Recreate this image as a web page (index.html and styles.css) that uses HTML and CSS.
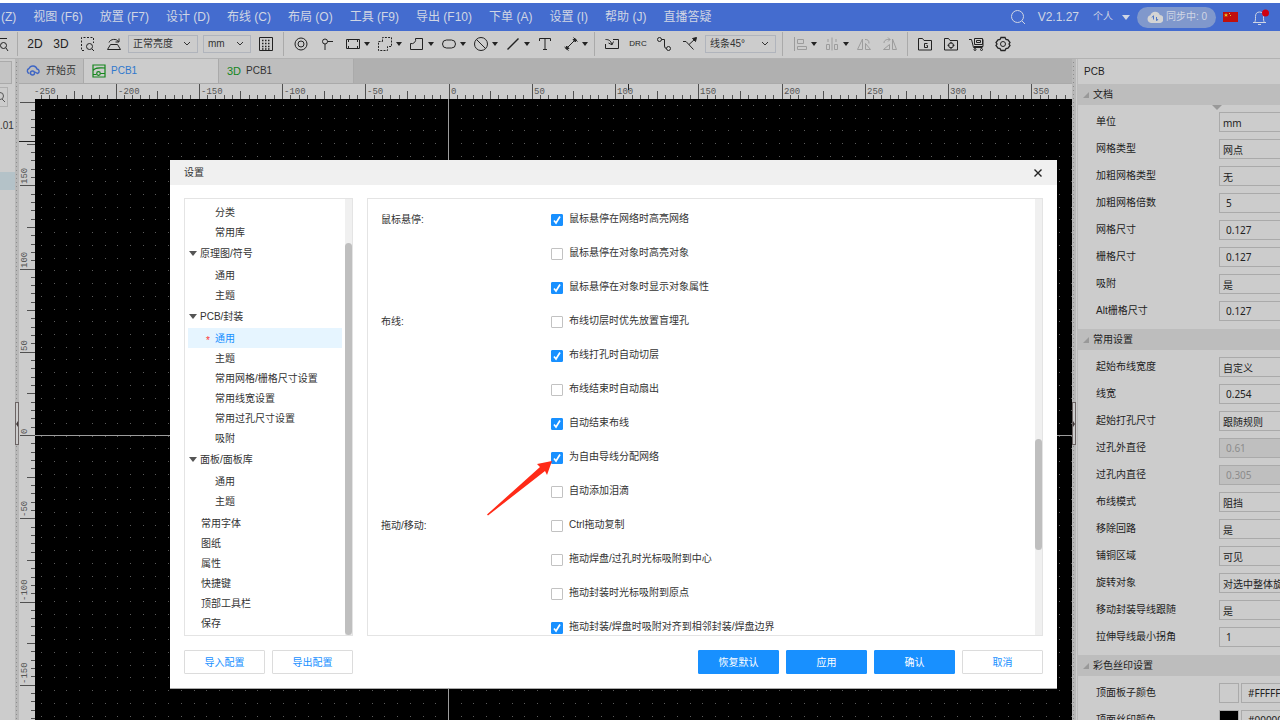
FILE: index.html
```html
<!DOCTYPE html>
<html lang="zh-CN">
<head>
<meta charset="utf-8">
<title>PCB1</title>
<link rel="stylesheet" href="styles.css">
</head>
<body>
<div class="app">
  <header class="menubar">
    <nav class="menus">
      <a href="#">(Z)</a><a href="#">视图 (F6)</a><a href="#">放置 (F7)</a><a href="#">设计 (D)</a><a href="#">布线 (C)</a><a href="#">布局 (O)</a><a href="#">工具 (F9)</a><a href="#">导出 (F10)</a><a href="#">下单 (A)</a><a href="#">设置 (I)</a><a href="#">帮助 (J)</a><a href="#">直播答疑</a>
    </nav>
    <div class="account">
      <svg width="16" height="16" viewBox="0 0 16 16" class="line"><circle cx="7.5" cy="7.5" r="6"/><path d="M12 12l3 3"/></svg>
      <span class="version">V2.1.27</span>
      <button class="team">个人<i class="caret"></i></button>
      <button class="sync"><svg width="16" height="12" viewBox="0 0 16 12"><path fill="#d4d4d4" d="M4 12a4 4 0 0 1-.6-7.8A5 5 0 0 1 12.8 4 4 4 0 0 1 12 12z"/><path fill="none" stroke="#5078c8" d="M6.500 5v3.500M9.500 6v3.500M5 6.500l1.500-2M11 8l-1.500 2"/></svg>同步中: 0</button>
      <svg class="flag" width="15" height="10" viewBox="0 0 15 10"><path fill="#c00f0c" d="M0 0h15v10H0z"/><path fill="#e6c02a" d="M3 1l.6 1.400H5L4 3.300l.4 1.400L3 4l-1.400.7L2 3.300 1 2.400h1.400zM6 1h1v1H6zM7 3h1v1H7z"/></svg>
      <svg class="bell line" width="20" height="18" viewBox="0 0 20 18"><path d="M2 14.500h13M3.500 14.500c1-1.500 1-2.500 1-6 0-3 1.500-4.500 4-4.500s4 1.500 4 4.500c0 3.500 0 4.500 1 6M7 16.500h3"/><circle cx="14.500" cy="5" r="3.500" fill="#cf0010" stroke="none"/></svg>
    </div>
  </header>

  <div class="toolbar">
    <button class="tool edge"><svg width="16" height="16" viewBox="0 0 16 16"><path d="M0 2.500h10M0 6.500h3M0 11.500h3"/><circle cx="6.500" cy="9.500" r="3"/><path d="M9 12l2 3"/></svg></button>
    <span class="sep"></span>
    <button class="tool txt">2D</button><button class="tool txt">3D</button>
    <button class="tool gap"><svg width="16" height="16" viewBox="0 0 16 16"><path stroke-dasharray="2 1.500" d="M4 14.500H1.500v-13h12V7"/><circle cx="9.500" cy="10.500" r="3"/><path d="M12 13l2 2"/></svg></button>
    <button class="tool"><svg width="16" height="16" viewBox="0 0 16 16"><path d="M4.500 8.500h7l3 5h-13zM3 6.500C4 3 11 2 12.500 6M13 2.500V6H9.500"/></svg></button>
    <select class="pick w70" aria-label="亮度"><option>正常亮度</option></select>
    <select class="pick w48" aria-label="单位制"><option>mm</option></select>
    <button class="tool"><svg width="16" height="16" viewBox="0 0 16 16"><path d="M1.500 1.500h13v13h-13z"/><path stroke-width="1.500" stroke-dasharray="1.500 1.500" d="M4 4.500h8M4 7.500h8M4 10.500h8M4 13h8"/></svg></button>
    <span class="sep"></span>
    <button class="tool"><svg width="16" height="16" viewBox="0 0 16 16"><circle cx="8" cy="8" r="6"/><circle cx="8" cy="8" r="3"/></svg></button>
    <button class="tool"><svg width="16" height="16" viewBox="0 0 16 16"><circle cx="6" cy="5.500" r="2.500"/><path d="M8.500 5.500H14M6 8v6"/></svg></button>
    <button class="tool drop"><svg width="16" height="16" viewBox="0 0 16 16"><path d="M1.500 3.500h13v9h-13z"/><path stroke-width="2" d="M3 5h1M12 5h1M3 11h1M12 11h1"/></svg><i class="caret"></i></button>
    <button class="tool drop"><svg width="16" height="16" viewBox="0 0 16 16"><path stroke-dasharray="2 1.200" d="M5.500 5.500v-4h9v9h-4v4h-9v-9z"/></svg><i class="caret"></i></button>
    <button class="tool drop"><svg width="16" height="16" viewBox="0 0 16 16"><path d="M1.500 7.500a4 4 0 0 0 5-5h7v11h-12z"/></svg><i class="caret"></i></button>
    <button class="tool drop"><svg width="16" height="16" viewBox="0 0 16 16"><rect x="1.500" y="4" width="13" height="8" rx="4"/></svg><i class="caret"></i></button>
    <button class="tool drop"><svg width="16" height="16" viewBox="0 0 16 16"><circle cx="8" cy="8" r="6.500"/><path d="M3.500 3.500l9 9"/></svg><i class="caret"></i></button>
    <button class="tool drop"><svg width="16" height="16" viewBox="0 0 16 16"><path stroke-width="1.400" d="M2.500 13.500l11-11"/></svg><i class="caret"></i></button>
    <button class="tool"><svg width="16" height="16" viewBox="0 0 16 16"><path d="M2.500 5V2.500h11V5M8 2.500v11M6 13.500h4"/></svg></button>
    <button class="tool drop"><svg width="16" height="16" viewBox="0 0 16 16"><path d="M3 13L13 3M1.500 11l4 3.500M10.500 1.500l4 4"/><path fill="#222" d="M3 13l.5-3L6 12.500zM13 3l-3 .5L12.500 6z"/></svg><i class="caret"></i></button>
    <span class="sep"></span>
    <button class="tool"><svg width="16" height="16" viewBox="0 0 16 16"><path d="M9 3.500h5.500v9h-13V8M1.500 3.500c3.500 0 5 1 6.500 5M4.500 7L8 8.800 9.500 5.500"/></svg></button>
    <button class="tool mini">DRC</button>
    <button class="tool"><svg width="16" height="16" viewBox="0 0 16 16"><circle cx="3.500" cy="3.500" r="2"/><circle cx="12.500" cy="12.500" r="2"/><path d="M5.500 3.500h3v6.500q0 2.500 2 2.500"/></svg></button>
    <button class="tool"><svg width="16" height="16" viewBox="0 0 16 16"><path d="M1 5.500h3l7.500 8M7 8.500L13 3"/><path fill="#222" d="M14.500 1.500l-1 4-3-3z"/></svg></button>
    <select class="pick w71" aria-label="线条"><option>线条45°</option></select>
    <span class="sep"></span>
    <button class="tool drop dim"><svg width="16" height="16" viewBox="0 0 16 16"><path d="M2.500 1v14M5.500 3.500h6v4h-6zM5.500 10.500h9v3h-9z"/></svg><i class="caret"></i></button>
    <button class="tool drop dim"><svg width="16" height="16" viewBox="0 0 16 16"><path d="M8 1.500v13M2.500 8.500h3v5h-3zM10.500 8.500h3v5h-3zM4 3v3M12 3v3"/></svg><i class="caret"></i></button>
    <button class="tool dim"><svg width="16" height="16" viewBox="0 0 16 16"><path d="M6.500 3v10.500h-5zM9.500 7.500l5 6h-5zM9 3.500c3 0 4 1 4 4"/></svg></button>
    <button class="tool dim"><svg width="16" height="16" viewBox="0 0 16 16"><path d="M10.500 3v10.500h4zM1.500 13.500l6-5v5zM2 7c0-3 3-4 6-3.500M6 1.500l2 2-2 2"/></svg></button>
    <span class="sep"></span>
    <button class="tool"><svg width="16" height="16" viewBox="0 0 16 16"><path d="M1.500 14v-11.500h4l1.500 2h7.500v9.500h-13M10.500 7.500h-3v4h3v-2h-1"/></svg></button>
    <button class="tool"><svg width="16" height="16" viewBox="0 0 16 16"><path d="M1.500 14v-11.500h4l1.500 2h7.500v9.500h-13"/><circle cx="8" cy="9.300" r="2.500"/><path d="M8 5.800v2M8 11v2M4.500 9.300h2M9.500 9.300h2"/></svg></button>
    <button class="tool"><svg width="16" height="16" viewBox="0 0 16 16"><path d="M0 3.500h2.500l2 8h9M5.500 2.500h8v6h-8zM7.500 4.500h4v2h-4zM5 10.500h9v-7"/><circle cx="6" cy="13.500" r="1"/><circle cx="12.500" cy="13.500" r="1"/></svg></button>
    <button class="tool"><svg width="16" height="16" viewBox="0 0 16 16"><path stroke-width="1.300" d="M6 1.500h4l1 2 2 .3 2 2.700-1 1.500 1 1.500-2 2.700-2 .3-1 2H6l-1-2-2-.3-2-2.700L2 8 1 6.500l2-2.700 2-.3z"/><circle cx="8" cy="8" r="2.500"/></svg></button>
  </div>

  <main class="work">
    <aside class="dock">
      <div class="dock-tab"></div>
      <div class="dock-search"><svg width="10" height="12" viewBox="0 0 10 12"><circle cx="0" cy="5" r="3.500"/><path d="M2 8l3 3"/></svg></div>
      <div class="dock-text">.01</div>
      <div class="dock-row"></div>
    </aside>
    <div class="splitter"><button class="grip" aria-label="收起左侧"><svg width="2" height="6" viewBox="0 0 2 6"><path d="M2 0v6L0 3z"/></svg></button></div>

    <section class="editor">
      <div class="tabs">
        <button class="tab"><svg width="15" height="12" viewBox="0 0 15 12" fill="none" stroke="#3f66c4" stroke-width="1.400"><path d="M3.500 8.500A2.600 2.600 0 0 1 3 3.500 4.300 4.300 0 0 1 11 4a2.300 2.300 0 0 1 .5 4.500L9 7"/><circle cx="6.500" cy="8" r="2"/></svg>开始页</button>
        <button class="tab wide on"><svg width="14" height="14" viewBox="0 0 14 14" fill="none" stroke="#14861c" stroke-width="1.200"><path d="M1 1h12v12H1zM1 6.500C4 3 7 4 13 4M1 10.500h3.500M8.500 9.500H13"/><circle cx="6.500" cy="9.500" r="1.800"/></svg>PCB1</button>
        <button class="tab wide"><span class="green">3D</span>PCB1</button>
      </div>
      <svg class="board" id="board"></svg>
    </section>

    <div class="splitter"><button class="grip" aria-label="收起右侧"><svg width="2" height="6" viewBox="0 0 2 6"><path d="M0 0v6l2-3z"/></svg></button></div>
    <aside class="props">
      <h2>PCB</h2>
      <h3>文档</h3>
      <div class="fields first">
        <label class="row"><span>单位</span><select><option>mm</option></select></label>
        <label class="row"><span>网格类型</span><select><option>网点</option></select></label>
        <label class="row"><span>加粗网格类型</span><select><option>无</option></select></label>
        <label class="row"><span>加粗网格倍数</span><input value="5"></label>
        <label class="row"><span>网格尺寸</span><input value="0.127"></label>
        <label class="row"><span>栅格尺寸</span><input value="0.127"></label>
        <label class="row"><span>吸附</span><select><option>是</option></select></label>
        <label class="row"><span>Alt栅格尺寸</span><input value="0.127"></label>
      </div>
      <h3>常用设置</h3>
      <div class="fields">
        <label class="row"><span>起始布线宽度</span><select><option>自定义</option></select></label>
        <label class="row"><span>线宽</span><input value="0.254"></label>
        <label class="row"><span>起始打孔尺寸</span><select><option>跟随规则</option></select></label>
        <label class="row"><span>过孔外直径</span><input value="0.61" disabled></label>
        <label class="row"><span>过孔内直径</span><input value="0.305" disabled></label>
        <label class="row"><span>布线模式</span><select><option>阻挡</option></select></label>
        <label class="row"><span>移除回路</span><select><option>是</option></select></label>
        <label class="row"><span>铺铜区域</span><select><option>可见</option></select></label>
        <label class="row"><span>旋转对象</span><select><option>对选中整体旋转</option></select></label>
        <label class="row"><span>移动封装导线跟随</span><select><option>是</option></select></label>
        <label class="row"><span>拉伸导线最小拐角</span><input value="1"></label>
      </div>
      <h3>彩色丝印设置</h3>
      <div class="fields">
        <label class="row"><span>顶面板子颜色</span><i class="swatch"></i><input value="#FFFFFF"></label>
        <label class="row"><span>顶面丝印颜色</span><i class="swatch black"></i><input value="#000000"></label>
      </div>
    </aside>
  </main>

  <div class="dialog" role="dialog" aria-label="设置">
    <div class="title"><span>设置</span><button class="close" aria-label="关闭"><svg width="10" height="10" viewBox="0 0 10 10"><path d="M1.500 1.500l7 7M8.500 1.500l-7 7"/></svg></button></div>
    <div class="panes">
      <div class="box tree">
        <ul>
          <li class="sub">分类</li><li class="sub">常用库</li>
          <li class="group">原理图/符号</li>
          <li class="sub">通用</li><li class="sub">主题</li>
          <li class="group">PCB/封装</li>
          <li class="sub on">通用</li><li class="sub">主题</li><li class="sub">常用网格/栅格尺寸设置</li><li class="sub">常用线宽设置</li><li class="sub">常用过孔尺寸设置</li><li class="sub">吸附</li>
          <li class="group">面板/面板库</li>
          <li class="sub">通用</li><li class="sub">主题</li>
        </ul>
        <ul class="leaves">
          <li>常用字体</li><li>图纸</li><li>属性</li><li>快捷键</li><li>顶部工具栏</li><li>保存</li>
        </ul>
        <div class="track"><div class="thumb tree-thumb"></div></div>
      </div>
      <div class="box options">
        <fieldset><legend>鼠标悬停:</legend>
          <div class="checks">
            <label><input type="checkbox" checked>鼠标悬停在网络时高亮网络</label>
            <label><input type="checkbox">鼠标悬停在对象时高亮对象</label>
            <label><input type="checkbox" checked>鼠标悬停在对象时显示对象属性</label>
          </div></fieldset>
        <fieldset><legend>布线:</legend>
          <div class="checks">
            <label><input type="checkbox">布线切层时优先放置盲埋孔</label>
            <label><input type="checkbox" checked>布线打孔时自动切层</label>
            <label><input type="checkbox">布线结束时自动扇出</label>
            <label><input type="checkbox" checked>自动结束布线</label>
            <label><input type="checkbox" checked>为自由导线分配网络</label>
            <label><input type="checkbox">自动添加泪滴</label>
          </div></fieldset>
        <fieldset><legend>拖动/移动:</legend>
          <div class="checks">
            <label><input type="checkbox">Ctrl拖动复制</label>
            <label><input type="checkbox">拖动焊盘/过孔时光标吸附到中心</label>
            <label><input type="checkbox">拖动封装时光标吸附到原点</label>
            <label><input type="checkbox" checked>拖动封装/焊盘时吸附对齐到相邻封装/焊盘边界</label>
          </div></fieldset>
        <div class="track"><div class="thumb opt-thumb"></div></div>
        <svg class="arrow" width="68" height="56" viewBox="0 0 68 56"><path fill="#ff2a17" d="M66 1L51 4l3 3L1 54.500l1 1L59 11l2 4z"/></svg>
      </div>
    </div>
    <div class="actions">
      <button>导入配置</button><button>导出配置</button><span class="grow"></span>
      <button class="primary">恢复默认</button><button class="primary">应用</button><button class="primary">确认</button><button>取消</button>
    </div>
  </div>
</div>
<script src="board.js"></script>
</body>
</html>
```
FILE: board.js
```js
// Draws the rulers, the dot grid and the origin axes of the board view.
const board = document.getElementById('board');
const W = board.clientWidth, H = board.clientHeight;
const LEFT = 16, TOP = 15;      // ruler thickness
const OX = 430, OY = 351;       // origin of the board
const MAJOR = 83.25;            // pixels per 50 units
const MINOR = MAJOR / 10;

let out = `<rect x="${LEFT}" y="${TOP}" width="${W}" height="${H}" fill="#000"/>`;

let dots = '';
for (let i = 0; LEFT + 6 + i * 12.72 < W; i++)
  for (let j = 0; TOP + 6 + j * 12.72 < H; j++)
    dots += `M${Math.round(LEFT + 6 + i * 12.72)} ${Math.round(TOP + 6 + j * 12.72)}h1v1h-1z`;
out += `<path d="${dots}" fill="#5c5c5c"/>`;

let ticks = '';
for (let i = -60; i <= 90; i++) {
  const len = i % 10 === 0 ? 15 : i % 5 === 0 ? 8 : 4;
  const x = Math.round(OX + i * MINOR - 0.5), y = Math.round(OY + i * MINOR);
  if (x > LEFT && x < W) ticks += `M${x} ${TOP - len}h1v${len}h-1z`;
  if (y > TOP && y < H) ticks += `M${LEFT - len} ${y}h${len}v1h-${len}z`;
  if (i % 10 === 0) {
    if (x > 0 && x < W) out += `<text x="${x + 2}" y="10">${i * 5}</text>`;
    if (y > TOP + 10 && y < H) out += `<text transform="translate(8 ${y - 1}) rotate(-90)">${-i * 5}</text>`;
  }
}
out += `<path d="${ticks}" fill="#505050"/>`;
out += `<path d="M609 0h1v6h-1zM0 57h16v1H0z" fill="#222"/>`;
out += `<path d="M${OX - 1} ${TOP}h1v${H}h-1zM${LEFT} ${OY}h${W}v1h-${W}z" fill="#9c9c9c"/>`;
board.innerHTML = out;
```
FILE: styles.css
```css
* { box-sizing: border-box; }
body { margin: 0; background: #fff; font: 10px/20px "Liberation Sans", "Noto Sans CJK SC", sans-serif; color: #333; }
button, input, select { font: inherit; color: inherit; margin: 0; padding: 0; border: 0; background: none; border-radius: 0; appearance: none; outline: 0; }
ul { margin: 0; padding: 0; list-style: none; }
.app { height: 100vh; display: flex; flex-direction: column; overflow: hidden; padding-top: 3px; }
.caret { display: inline-block; border: 4px solid transparent; border-top: 5px solid currentColor; border-bottom: 0; }

/* menu bar */
.menubar { flex: none; height: 28px; background: #446ccf; color: #d0d6e4; display: flex; justify-content: space-between; align-items: center; }
.menus { display: flex; gap: 17px; padding-left: 1px; font-size: 12px; white-space: nowrap; }
.menus a { color: inherit; text-decoration: none; }
.account { display: flex; align-items: center; padding-right: 9px; }
.line { fill: none; stroke: #d0d6e4; }
.version { margin: 0 14px 0 12px; font-size: 12px; }
.team { display: flex; align-items: center; gap: 9px; line-height: 22px; }
.sync { display: flex; align-items: center; gap: 3px; height: 21px; width: 79px; padding-left: 10px; margin: 0 7px; border-radius: 11px; background: #8098cc; white-space: nowrap; line-height: 22px; }
.bell { margin-left: 13px; }

/* toolbar */
.toolbar { flex: none; height: 28px; background: #ccc; border-bottom: 1px solid #b2b2b2; padding-bottom: 1px; display: flex; align-items: center; }
.tool { flex: none; width: 26px; height: 24px; display: flex; align-items: center; justify-content: center; color: #222; }
.tool svg { fill: none; stroke: #222; flex: none; }
.tool.edge { width: 13px; justify-content: flex-end; }
.tool.gap { margin-left: 1px; }
.tool.drop { width: 32px; justify-content: flex-start; padding-left: 5px; gap: 3px; }
.tool.drop .caret { border-width: 3px; border-top-width: 4px; border-bottom: 0; }
.tool.dim svg { stroke: #9c9c9c; }
.tool.txt { font-size: 12px; }
.tool.mini { font-size: 8px; }
.sep { flex: none; width: 1px; height: 24px; background: #aaa; margin: 0 4px; }
.pick { flex: none; height: 18px; border: 1px solid #b0b4bc; padding: 0 4px; line-height: 16px; background: url("data:image/svg+xml,%3Csvg xmlns='http://www.w3.org/2000/svg' width='6' height='4'%3E%3Cpath d='M0 0l3 3 3-3' fill='none' stroke='%23333'/%3E%3C/svg%3E") no-repeat right 7px center; }
.w70 { width: 70px; margin: 0 5px 0 1px; }
.w48 { width: 48px; margin-right: 2px; }
.w71 { width: 71px; margin: 0 2px; }

/* workspace */
.work { flex: 1; min-height: 0; display: flex; background: #ccc; }
.dock { flex: none; width: 15px; overflow: hidden; }
.dock-tab { height: 23px; width: 12px; margin-top: 2px; background: #c4c4c4; border: 1px solid #aaa; border-left: 0; }
.dock-search { height: 20px; width: 8px; margin-top: 3px; border: 1px solid #b0b0b0; border-left: 0; display: flex; align-items: center; overflow: hidden; }
.dock-search svg { fill: none; stroke: #555; flex: none; }
.dock-text { height: 18px; margin-top: 10px; line-height: 18px; }
.dock-row { height: 18px; margin-top: 37px; background: #b4c2c8; }
.splitter { flex: none; width: 4px; background: #b8b8b8; background-image: linear-gradient(#b8b8b8 3px, transparent 3px), linear-gradient(90deg, transparent 1px, #8c8c8c 1px, #8c8c8c 2px, transparent 2px); background-size: 4px 4px; display: flex; align-items: center; padding-top: 68px; }
.splitter + .props { margin-left: 1px; }
.grip { width: 4px; height: 43px; border: 1px solid #6c6464; background: #ccc; display: flex; align-items: center; }
.grip svg { flex: none; fill: #403838; }
.editor { flex: 1; min-width: 0; display: flex; flex-direction: column; }
.tabs { flex: none; height: 25px; background: #b0b0b0; border-bottom: 1px solid #aaa; display: flex; }
.tab { display: flex; align-items: center; gap: 5px; width: 65px; padding-left: 7px; background: #bebebe; border-right: 1px solid #aaa; white-space: nowrap; }
.tab.wide { width: 135px; padding-left: 8px; }
.tab.on { background: #ccc; color: #2f78cc; }
.green { color: #14861c; font-size: 11px; }
.board { flex: 1; min-height: 0; width: 100%; display: block; background: #ccc; }
.board text { font: 9px "Liberation Mono", monospace; fill: #555; }

/* property panel */
.props { flex: none; width: 203px; overflow: hidden; border-left: 1px solid #bbb; color: #222; }
.props h2, .props h3 { margin: 0; font-size: 10px; font-weight: normal; }
.props h2 { height: 25px; line-height: 25px; padding-left: 6px; }
.props h3 { height: 21px; line-height: 20px; background: #bdbdbd; display: flex; align-items: center; gap: 4px; padding-left: 5px; }
.props h3::before { content: ""; border: 3px solid transparent; border-right-color: #999; border-bottom-color: #999; }
.fields { padding: 3px 0 5px 18px; }
.first { position: relative; }
.first::before { content: ""; position: absolute; left: 134px; top: 0; border: 5px solid transparent; border-top-color: #999; border-bottom: 0; }
.row { display: flex; align-items: center; height: 27px; white-space: nowrap; }
.row span { flex: none; width: 123px; }
.row input, .row select { flex: none; width: 110px; height: 20px; margin-top: 1px; border: 1px solid #aaa; padding: 0 3px; font-family: "Noto Sans", "Noto Sans CJK SC", sans-serif; }
.row input { padding-left: 6px; }
.row input:disabled { background: #bfbfbf; color: #8c8c8c; }
.swatch { flex: none; width: 20px; height: 20px; margin: 1px 2px 0 0; border: 1px solid #aaa; }
.black { background: #000; }

/* settings dialog */
.dialog { position: fixed; left: 170px; top: 160px; width: 887px; height: 529px; background: #fff; border-bottom: 1px solid #aaa; display: flex; flex-direction: column; }
.title { flex: none; height: 25px; line-height: 25px; background: #f0f0f0; display: flex; justify-content: space-between; align-items: center; padding: 0 14px; }
.close { display: flex; }
.close svg { fill: none; stroke: #222; stroke-width: 1.400; }
.panes { flex: 1; min-height: 0; display: flex; gap: 14px; padding: 13px 14px 14px; }
.box { position: relative; border: 1px solid #e4e4e4; overflow: hidden; }
.tree { flex: none; width: 169px; padding: 3px 10px 0 3px; }
.tree li { height: 20px; line-height: 21px; padding-left: 13px; white-space: nowrap; }
.tree li.group { height: 23px; line-height: 23px; padding-left: 1px; display: flex; align-items: center; gap: 3px; }
.group::before { content: ""; border: 4px solid transparent; border-top: 5px solid #555; border-bottom: 0; }
.tree li.sub { padding-left: 27px; }
.tree li.on { position: relative; background: #e6f5ff; color: #1890ff; }
.sub.on::before { content: "*"; position: absolute; left: 18px; top: 2px; color: #f33; }
.leaves { padding-top: 2px; }
.options { flex: 1; padding: 3px 7px 0 13px; }
fieldset { display: flex; margin: 0; padding: 0; border: 0; min-width: 0; }
legend { float: left; width: 170px; padding: 0; line-height: 35px; }
.checks label { display: flex; align-items: center; gap: 6px; height: 34px; line-height: 22px; white-space: nowrap; }
.checks input { flex: none; width: 12px; height: 12px; margin-top: 1px; border: 1px solid #c2c2c2; border-radius: 1px; background: #fff; }
.checks input:checked { border-color: #1890ff; background: #1890ff url("data:image/svg+xml,%3Csvg xmlns='http://www.w3.org/2000/svg' width='10' height='10'%3E%3Cpath d='M2 5.500l2 2.500 4-6.500' fill='none' stroke='white' stroke-width='1.700'/%3E%3C/svg%3E") center no-repeat; }
.track { position: absolute; right: 0; top: 0; bottom: 0; width: 7px; background: #f0f0f0; }
.thumb { position: absolute; width: 7px; border-radius: 4px; background: #bfbfbf; }
.tree-thumb { top: 10%; bottom: 0; }
.opt-thumb { top: 55%; height: 111px; }
.arrow { position: absolute; left: 118px; top: 261px; }
.actions { flex: none; display: flex; gap: 7px; padding: 0 14px 14px; }
.actions button { width: 81px; height: 24px; line-height: 23px; border: 1px solid #dcdcdc; border-radius: 1px; color: #1890ff; }
.actions .primary { background: #1890ff; border-color: #1890ff; color: #fff; }
.grow { flex: 1; }
```
